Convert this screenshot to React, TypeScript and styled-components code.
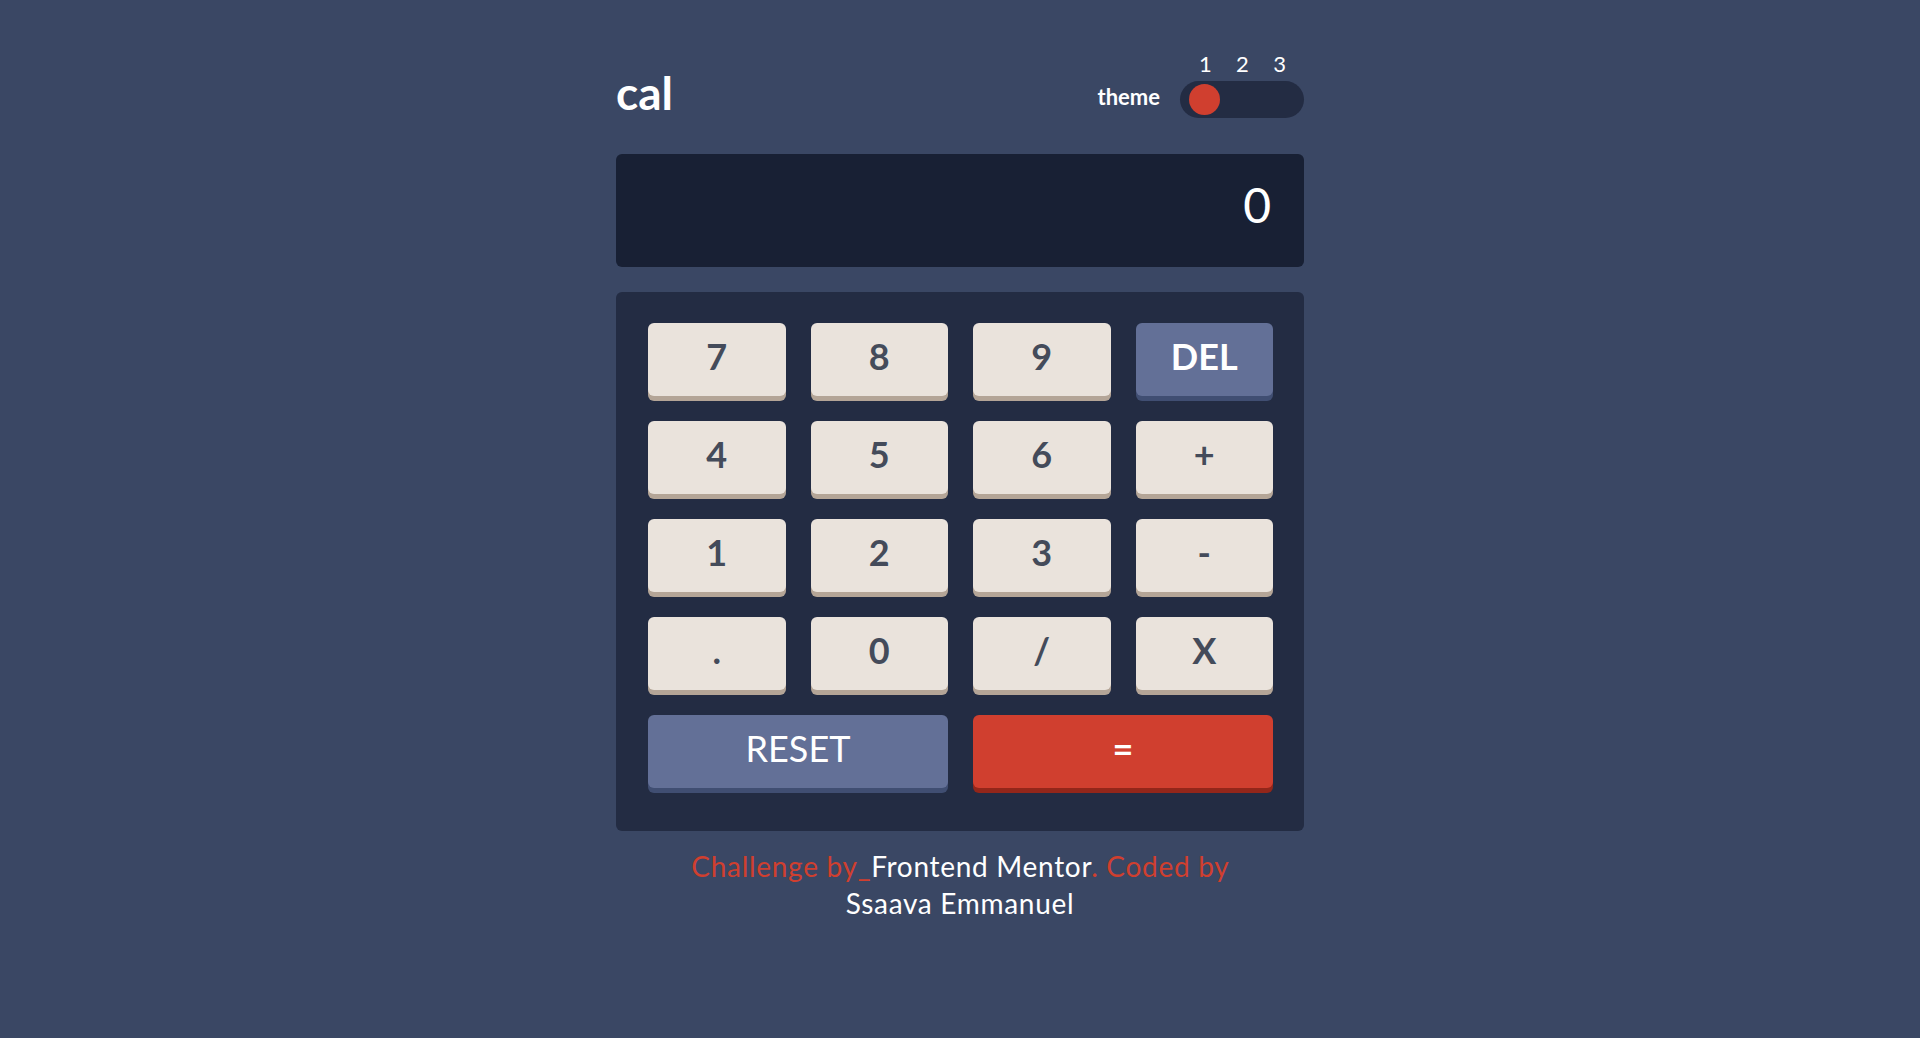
import styled, { createGlobalStyle } from 'styled-components';

const GlobalStyle = createGlobalStyle`
  * {
    box-sizing: border-box;
  }

  body {
    margin: 0;
    background: #3a4764;
    font-family: Lato, "Liberation Sans", sans-serif;
  }
`;

const StyledPage = styled.div`
  display: flex;
  flex-direction: column;
  align-items: center;
  min-height: 100vh;
  padding-top: 53px;
`;

const StyledCalculator = styled.div`
  display: flex;
  flex-direction: column;
  width: 688px;
`;

const StyledHeader = styled.header`
  display: flex;
  align-items: flex-end;
  justify-content: space-between;
  height: 65px;
`;

const StyledLogo = styled.h1`
  margin: 0 0 2px;
  color: #ffffff;
  font-size: 46px;
  font-weight: 700;
  line-height: 1;
`;

const StyledThemePicker = styled.div`
  display: flex;
  align-items: flex-end;
  gap: 20px;
`;

const StyledThemeLabel = styled.span`
  margin-bottom: 10px;
  color: #ffffff;
  font-size: 22px;
  font-weight: 700;
  line-height: 1;
`;

const StyledSwitchColumn = styled.div`
  display: flex;
  flex-direction: column;
  gap: 6px;
  width: 124px;
`;

const StyledSwitchNumbers = styled.div`
  display: flex;
  justify-content: space-between;
  padding: 0 18px 0 19px;
  color: #ffffff;
  font-size: 22px;
  font-weight: 400;
  line-height: 1;
`;

const StyledSwitchTrack = styled.div`
  display: flex;
  align-items: center;
  height: 37px;
  padding: 0 9px;
  border-radius: 19px;
  background: #232c43;
`;

const StyledSwitchKnob = styled.div`
  width: 31px;
  height: 31px;
  border-radius: 50%;
  background: #d03f2f;
`;

const StyledScreen = styled.div`
  display: flex;
  align-items: center;
  justify-content: flex-end;
  height: 113px;
  margin-top: 36px;
  padding: 0 33px 11px 0;
  border-radius: 6px;
  background: #182034;
  color: #ffffff;
  font-size: 48px;
  font-weight: 400;
  line-height: 1;
`;

const StyledKeypad = styled.div`
  display: grid;
  grid-template-columns: repeat(4, 1fr);
  grid-auto-rows: 73px;
  gap: 25px;
  margin-top: 25px;
  padding: 31px 31px 43px 32px;
  border-radius: 6px;
  background: #232c43;
`;

const keyColors = {
  light: { face: '#eae3dc', shadow: '#b4a597', text: '#444b5a' },
  blue: { face: '#637097', shadow: '#404e72', text: '#ffffff' },
  red: { face: '#d03f2f', shadow: '#93261a', text: '#ffffff' },
};

type KeyKind = keyof typeof keyColors;

const StyledKey = styled.button<{ $kind: KeyKind; $wide?: boolean; $thin?: boolean }>`
  display: flex;
  align-items: center;
  justify-content: center;
  grid-column: ${(p) => (p.$wide ? 'span 2' : 'span 1')};
  padding: 0 0 7px;
  border: none;
  border-radius: 6px;
  background: ${(p) => keyColors[p.$kind].face};
  box-shadow: 0 5px 0 ${(p) => keyColors[p.$kind].shadow};
  color: ${(p) => keyColors[p.$kind].text};
  font-family: inherit;
  font-size: 36px;
  font-weight: ${(p) => (p.$thin ? 400 : 700)};
  line-height: 1;
  cursor: pointer;
`;

const StyledFooter = styled.footer`
  max-width: 560px;
  margin-top: 17px;
  color: #d03f2f;
  font-size: 28px;
  letter-spacing: 0.7px;
  line-height: 37px;
  text-align: center;
`;

const StyledFooterLink = styled.span`
  color: #ffffff;
`;

const keys: { label: string; kind: KeyKind; wide?: boolean; thin?: boolean }[] = [
  { label: '7', kind: 'light' },
  { label: '8', kind: 'light' },
  { label: '9', kind: 'light' },
  { label: 'DEL', kind: 'blue' },
  { label: '4', kind: 'light' },
  { label: '5', kind: 'light' },
  { label: '6', kind: 'light' },
  { label: '+', kind: 'light' },
  { label: '1', kind: 'light' },
  { label: '2', kind: 'light' },
  { label: '3', kind: 'light' },
  { label: '-', kind: 'light' },
  { label: '.', kind: 'light' },
  { label: '0', kind: 'light' },
  { label: '/', kind: 'light' },
  { label: 'X', kind: 'light' },
  { label: 'RESET', kind: 'blue', wide: true, thin: true },
  { label: '=', kind: 'red', wide: true },
];

export default function App() {
  return (
    <>
      <GlobalStyle />
      <StyledPage>
        <StyledCalculator>
          <StyledHeader>
            <StyledLogo>cal</StyledLogo>
            <StyledThemePicker>
              <StyledThemeLabel>theme</StyledThemeLabel>
              <StyledSwitchColumn>
                <StyledSwitchNumbers>
                  <span>1</span>
                  <span>2</span>
                  <span>3</span>
                </StyledSwitchNumbers>
                <StyledSwitchTrack>
                  <StyledSwitchKnob />
                </StyledSwitchTrack>
              </StyledSwitchColumn>
            </StyledThemePicker>
          </StyledHeader>
          <StyledScreen>0</StyledScreen>
          <StyledKeypad>
            {keys.map((key) => (
              <StyledKey key={key.label} $kind={key.kind} $wide={key.wide} $thin={key.thin}>
                {key.label}
              </StyledKey>
            ))}
          </StyledKeypad>
        </StyledCalculator>
        <StyledFooter>
          Challenge by_<StyledFooterLink>Frontend Mentor</StyledFooterLink>. Coded by{' '}
          <StyledFooterLink>Ssaava Emmanuel</StyledFooterLink>
        </StyledFooter>
      </StyledPage>
    </>
  );
}
